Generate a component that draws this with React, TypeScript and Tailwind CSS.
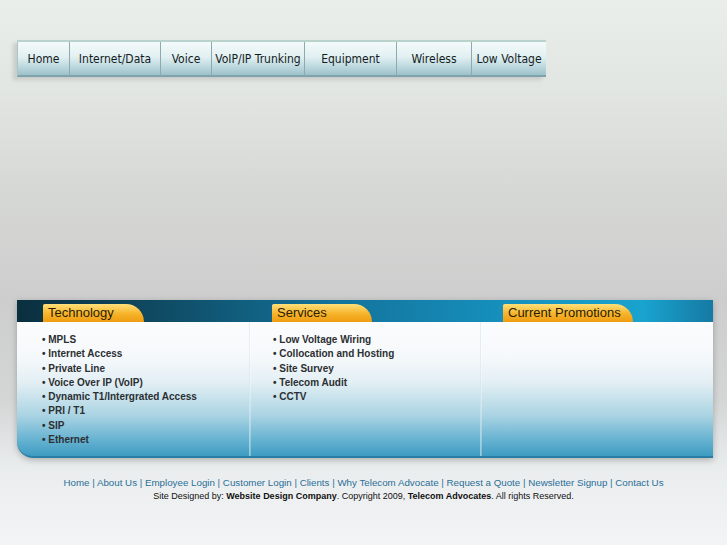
import React from 'react';

const navItems = [
  { label: 'Home', w: 'w-[52px]' },
  { label: 'Internet/Data', w: 'w-[91px]' },
  { label: 'Voice', w: 'w-[51px]' },
  { label: 'VoIP/IP Trunking', w: 'w-[93px]' },
  { label: 'Equipment', w: 'w-[92px]' },
  { label: 'Wireless', w: 'w-[75px]' },
  { label: 'Low Voltage', w: 'w-[75px]' },
];

const technology = [
  'MPLS',
  'Internet Access',
  'Private Line',
  'Voice Over IP (VoIP)',
  'Dynamic T1/Intergrated Access',
  'PRI / T1',
  'SIP',
  'Ethernet',
];

const services = ['Low Voltage Wiring', 'Collocation and Hosting', 'Site Survey', 'Telecom Audit', 'CCTV'];

const footerLinks = [
  'Home',
  'About Us',
  'Employee Login',
  'Customer Login',
  'Clients',
  'Why Telecom Advocate',
  'Request a Quote',
  'Newsletter Signup',
  'Contact Us',
];

function Tab({ label, className }: { label: string; className: string }) {
  return (
    <div
      className={`h-[18px] mt-[4px] rounded-tr-[20px] rounded-tl-[2px] bg-[linear-gradient(to_bottom,#ffe07a,#f6b329_55%,#ef9d12)] pl-[5px] text-[13px] leading-[18px] text-[#2a1c02] font-['Liberation_Sans',Arial,sans-serif] ${className}`}
    >
      {label}
    </div>
  );
}

function BulletList({ items }: { items: string[] }) {
  return (
    <ul className="font-['Liberation_Sans',Arial,sans-serif] text-[10px] font-bold leading-[14.3px] text-[#2c2f33]">
      {items.map((item) => (
        <li key={item}>• {item}</li>
      ))}
    </ul>
  );
}

export default function App() {
  return (
    <div className="min-h-[545px] w-full bg-[linear-gradient(to_bottom,#e9eeea_0px,#e2e6e2_90px,#d7d9d6_180px,#cdcdcd_300px,#d4d6d6_400px,#eaedee_470px,#f3f4f5_545px)]">
      <div className="pt-[40px] pl-[17px]">
        <nav className="flex h-[37px] w-max border-t-[2px] border-[#b9d2cc] shadow-[-4px_3px_4px_rgba(0,0,0,0.12)]">
          {navItems.map((item, i) => (
            <div
              key={item.label}
              className={`${item.w} flex items-center justify-center border-b-[2px] border-[#7fa3ac] bg-[linear-gradient(to_bottom,#f4fafa_0%,#e2f0f2_45%,#bcd8de_75%,#9ec1ca_100%)] text-[12px] text-[#141c1e] font-['DejaVu_Sans_Condensed','DejaVu_Sans',sans-serif] ${
                i > 0 ? 'border-l border-l-[#8fa9ae]' : 'border-l border-l-[#a9c5c8]'
              }`}
            >
              {item.label}
            </div>
          ))}
        </nav>
      </div>

      <div className="mt-[223px] ml-[17px] w-[696px] shadow-[0_2px_6px_rgba(0,0,0,0.25)] rounded-bl-[16px]">
        <div className="flex h-[22px] bg-[linear-gradient(to_right,#0a2f3f_0%,#0f4a62_20%,#13729a_45%,#1690bd_70%,#19a3cf_90%,#157aa3_100%)]">
          <div className="w-[233px] pl-[26px]">
            <Tab label="Technology" className="w-[101px]" />
          </div>
          <div className="w-[231px] pl-[22px]">
            <Tab label="Services" className="w-[100px]" />
          </div>
          <div className="w-[232px] pl-[22px]">
            <Tab label="Current Promotions" className="w-[130px]" />
          </div>
        </div>
        <div className="flex h-[136px] rounded-bl-[16px] border-b-[2px] border-[#2a7ea3] bg-[linear-gradient(to_bottom,#fbfcfd_0%,#f6f9fb_25%,#e3eff4_45%,#a9d3e3_70%,#66b2d1_88%,#3e9cc2_100%)]">
          <div className="w-[233px] pl-[25px] pt-[11px] border-r border-r-[#d6e7ee]/60">
            <BulletList items={technology} />
          </div>
          <div className="w-[231px] pl-[22px] pt-[11px] border-l border-l-white/30 border-r border-r-[#d6e7ee]/60">
            <BulletList items={services} />
          </div>
          <div className="w-[232px] border-l border-l-white/30" />
        </div>
      </div>

      <footer className="mt-[18px] text-center font-['Liberation_Sans',Arial,sans-serif]">
        <p className="text-[9.75px] leading-[13px] text-[#2a6f98]">
          {footerLinks.map((link, i) => (
            <React.Fragment key={link}>
              {i > 0 && ' | '}
              <a href="#">{link}</a>
            </React.Fragment>
          ))}
        </p>
        <p className="mt-[1px] text-[9px] leading-[12px] text-[#111]">
          Site Designed by: <b>Website Design Company</b>. Copyright 2009, <b>Telecom Advocates</b>. All rights Reserved.
        </p>
      </footer>
    </div>
  );
}
